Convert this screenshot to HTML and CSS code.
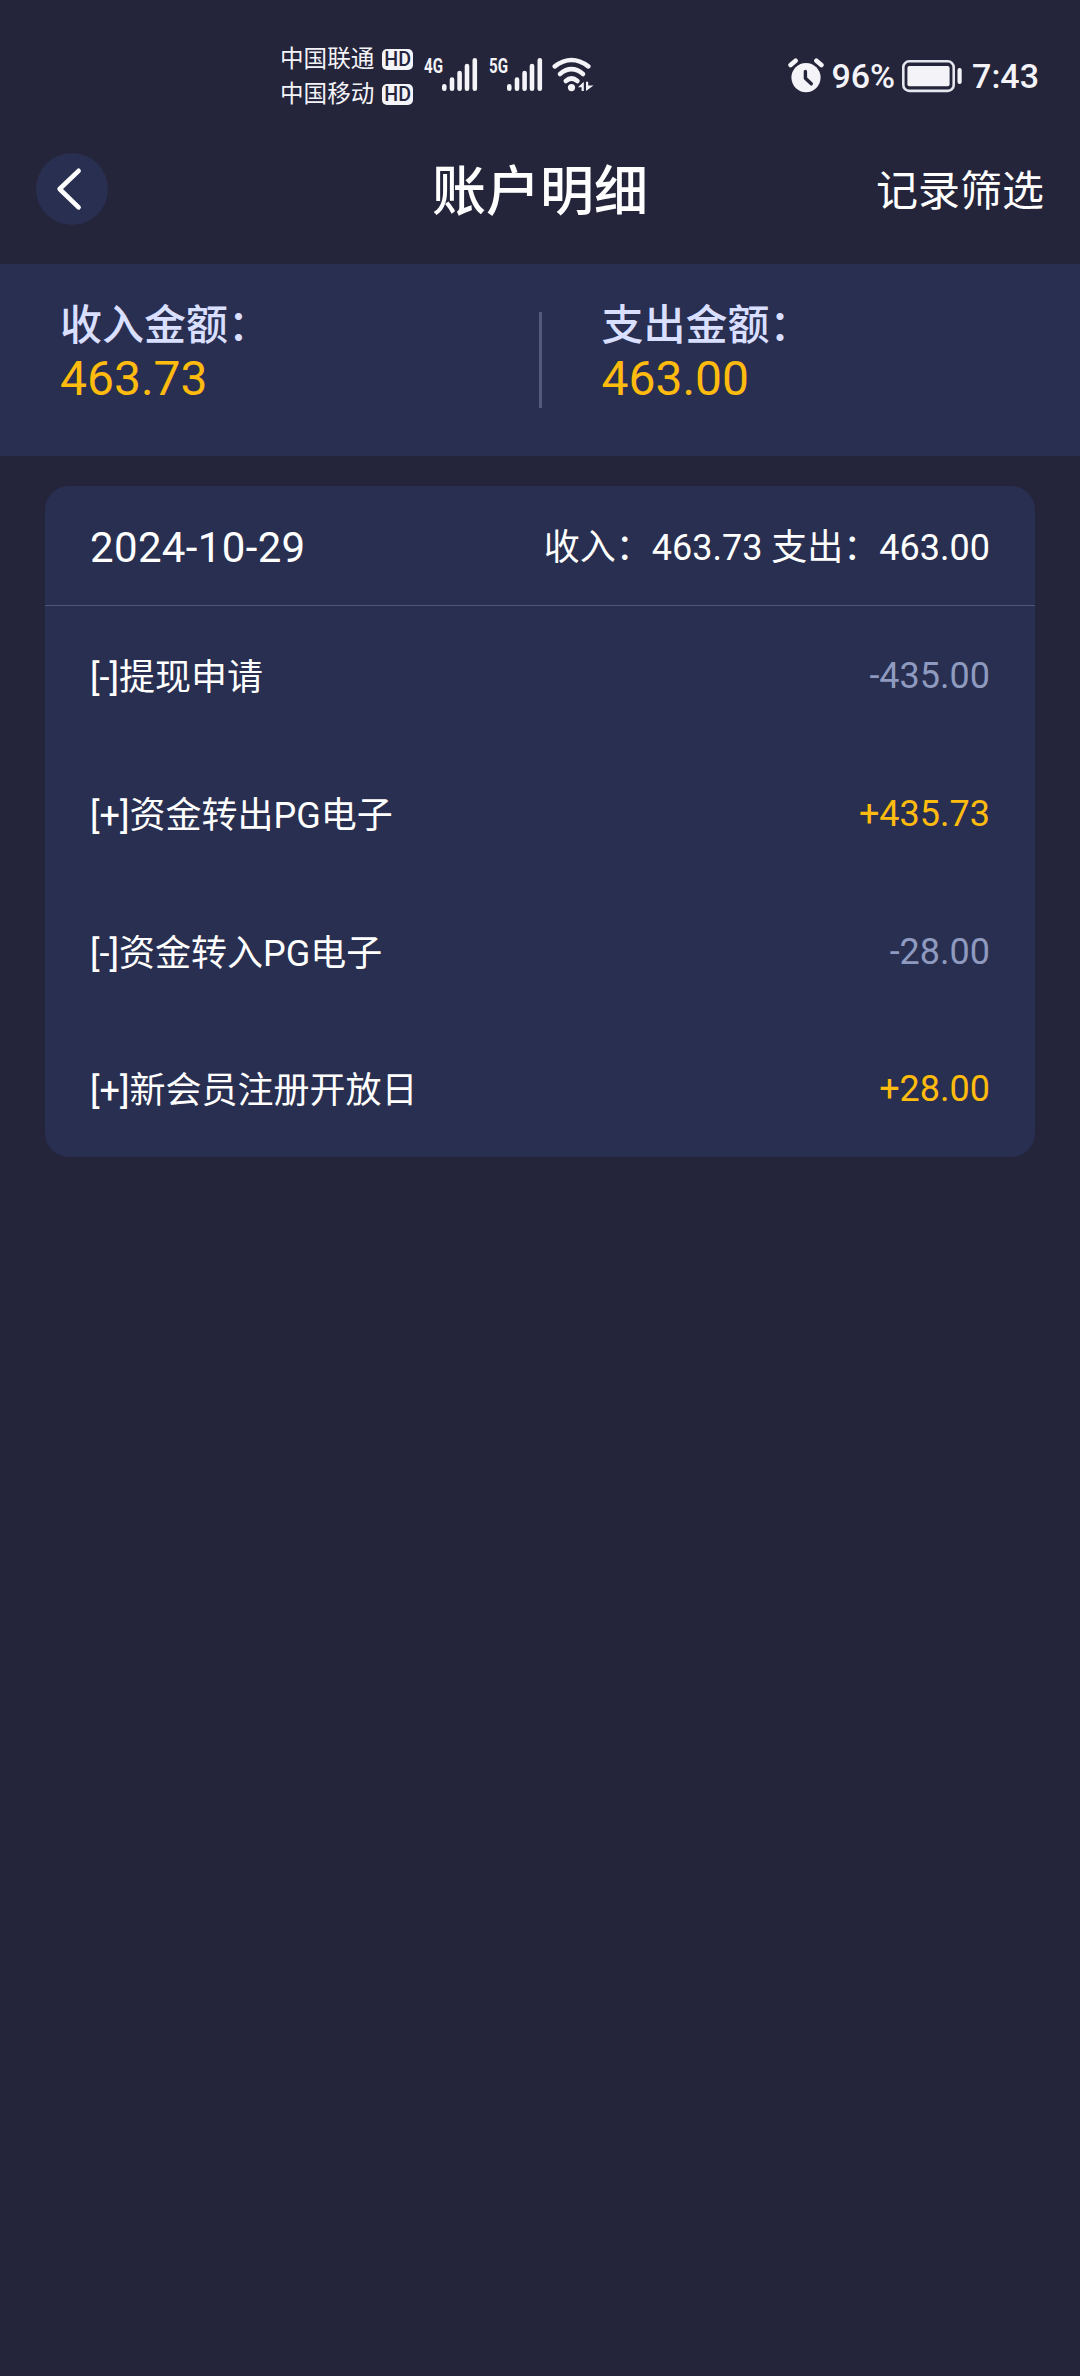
FILE: index.html
```html
<!DOCTYPE html>
<html lang="zh-CN">
<head>
<meta charset="utf-8">
<title>账户明细</title>
<link rel="stylesheet" href="styles.css">
</head>
<body>
<div class="status">
  <div class="carriers">
    <div class="carrier">中国联通 <span class="hd"><b>HD</b></span></div>
    <div class="carrier">中国移动 <span class="hd"><b>HD</b></span></div>
  </div>
  <svg class="signals" width="174" height="40" viewBox="420 54 174 40">
    <g class="net">
      <text x="424" y="73" textLength="19" lengthAdjust="spacingAndGlyphs">4G</text>
      <text x="489" y="73" textLength="19" lengthAdjust="spacingAndGlyphs">5G</text>
    </g>
    <g class="bars">
      <path d="M444.3 86.3v2.4M452 79.5v9.2M459.6 73v15.7M467 66v22.7M474.8 60.2v28.5"/>
      <path d="M509.3 86.3v2.4M517 79.5v9.2M524.6 73v15.7M532 66v22.7M539.8 60.2v28.5"/>
    </g>
    <g class="wifi">
      <path d="M554.8 66.3Q571.5 53.7 588.3 66.3"/>
      <path d="M560 74Q571.5 64.4 583 74"/>
      <path d="M565.8 81Q571.5 76 577.4 81"/>
    </g>
    <circle class="fill" cx="571.5" cy="87.6" r="3.6"/>
    <path class="fill" d="M578 87.2L583.8 81.8V91H581.6V87.2zM586 81.8H588.2V85.4H593.5L586 91z"/>
  </svg>
  <div class="power">
    <svg width="36" height="36" viewBox="0 0 36 36">
      <circle class="fill" cx="18" cy="19.6" r="14.6"/>
      <path class="ears" d="M2.6 7L7.6 2.8M33.4 7L28.4 2.8"/>
      <path class="hands" d="M17.4 13.5V20.2L23.3 25.8"/>
    </svg>
    <span class="percent">96%</span>
    <svg class="battery" width="60" height="34" viewBox="0 0 60 34">
      <rect class="shell" x="1.3" y="2.3" width="50.4" height="29.6" rx="6"/>
      <rect class="fill" x="5.4" y="7" width="42.2" height="20.3" rx="2"/>
      <rect class="fill" x="55.5" y="9" width="4.2" height="16" rx="2"/>
    </svg>
    <span class="clock">7:43</span>
  </div>
</div>

<header class="topbar">
  <a class="back"><svg width="72" height="72" viewBox="0 0 72 72"><path d="M42.6 17.8L23.6 36L42.6 54.4"/></svg></a>
  <h1 class="title">账户明细</h1>
  <a class="filter">记录筛选</a>
</header>

<section class="summary">
  <div class="total"><div class="label">收入金额：</div><div class="sum">463.73</div></div>
  <div class="divider"></div>
  <div class="total"><div class="label">支出金额：</div><div class="sum">463.00</div></div>
</section>

<section class="card">
  <div class="day"><span class="date">2024-10-29</span><span class="name">收入：463.73 支出：463.00</span></div>
  <div class="row"><span class="name">[-]提现申请</span><span class="out">-435.00</span></div>
  <div class="row"><span class="name">[+]资金转出PG电子</span><span class="in">+435.73</span></div>
  <div class="row"><span class="name">[-]资金转入PG电子</span><span class="out">-28.00</span></div>
  <div class="row"><span class="name">[+]新会员注册开放日</span><span class="in">+28.00</span></div>
</section>
</body>
</html>
```
FILE: styles.css
```css
* { box-sizing: border-box; }
body {
  margin: 0;
  width: 1080px;
  min-height: 2376px;
  background: #24243a;
  color: #fff;
  font-family: Roboto, "Noto Sans CJK SC", sans-serif;
  font-size: 36px;
}
svg { display: block; flex: none; }

.status {
  display: flex;
  height: 114px;
  padding: 42px 41px 0 280px;
  color: #f3f3f8;
}
.carriers { width: 140px; }
.carrier {
  display: flex;
  align-items: center;
  justify-content: space-between;
  height: 35px;
  padding-right: 7px;
  font-size: 23.6px;
  line-height: 35px;
  font-weight: 400;
  white-space: nowrap;
}
.hd {
  display: flex;
  align-items: center;
  justify-content: center;
  width: 31px;
  height: 21px;
  border-radius: 5px;
  background: #f3f3f8;
  color: #24243a;
}
.hd b { font-size: 20px; line-height: 21px; font-weight: 500; transform: scaleX(.98); }
.signals { margin-top: 12px; }
.net { fill: #f3f3f8; font: 700 20.5px Roboto, sans-serif; }
.bars path { fill: none; stroke: #f3f3f8; stroke-width: 4.6; stroke-linecap: round; }
.wifi path { fill: none; stroke: #f3f3f8; stroke-width: 4.6; stroke-linecap: round; }
.fill { fill: #f3f3f8; }
.power {
  display: flex;
  align-items: center;
  height: 36px;
  margin: 16px 0 0 auto;
  font-size: 34px;
  font-weight: 500;
}
.ears { fill: none; stroke: #f3f3f8; stroke-width: 4.6; stroke-linecap: round; }
.hands { fill: none; stroke: #24243a; stroke-width: 3.4; stroke-linecap: round; stroke-linejoin: round; }
.shell { fill: none; stroke: #e6e6ee; stroke-width: 2.6; }
.percent { margin-left: 7px; }
.battery { margin-left: 7px; }
.clock { margin-left: 10px; }

.topbar {
  display: grid;
  grid-template-columns: 1fr auto 1fr;
  align-items: center;
  height: 150px;
  padding: 0 36px;
}
.back { width: 72px; height: 72px; border-radius: 50%; background: #292f50; }
.back path { fill: none; stroke: #fff; stroke-width: 4.6; stroke-linecap: round; stroke-linejoin: round; }
.title { margin: 0; padding-top: 8px; font-size: 54px; line-height: 80px; font-weight: 500; }
.filter { justify-self: end; padding-top: 6px; font-size: 42px; line-height: 62px; }

.summary {
  display: flex;
  height: 192px;
  background: #292f50;
}
.total { flex: 1; padding: 36px 0 0 60px; }
.label { font-size: 42px; line-height: 52px; font-weight: 500; color: #d9dfff; }
.sum { font-size: 48px; line-height: 54px; color: #ffbb0e; }
.divider { width: 3px; height: 96px; margin-top: 48px; background: #53597b; }

.card {
  margin: 30px 45px 0;
  border-radius: 24px;
  background: #292f50;
}
.day, .row {
  display: flex;
  align-items: center;
  justify-content: space-between;
  padding: 0 45px;
}
.day { height: 120px; border-bottom: 1px solid #4f5679; }
.date { padding-top: 3px; font-size: 42px; letter-spacing: .35px; }
.name { padding-bottom: 3px; }
.row { height: 138px; }
.row:last-child { height: 137px; }
.out { padding-top: 1px; color: #8e9abf; }
.in { padding-top: 1px; color: #ffbb0e; }
```
